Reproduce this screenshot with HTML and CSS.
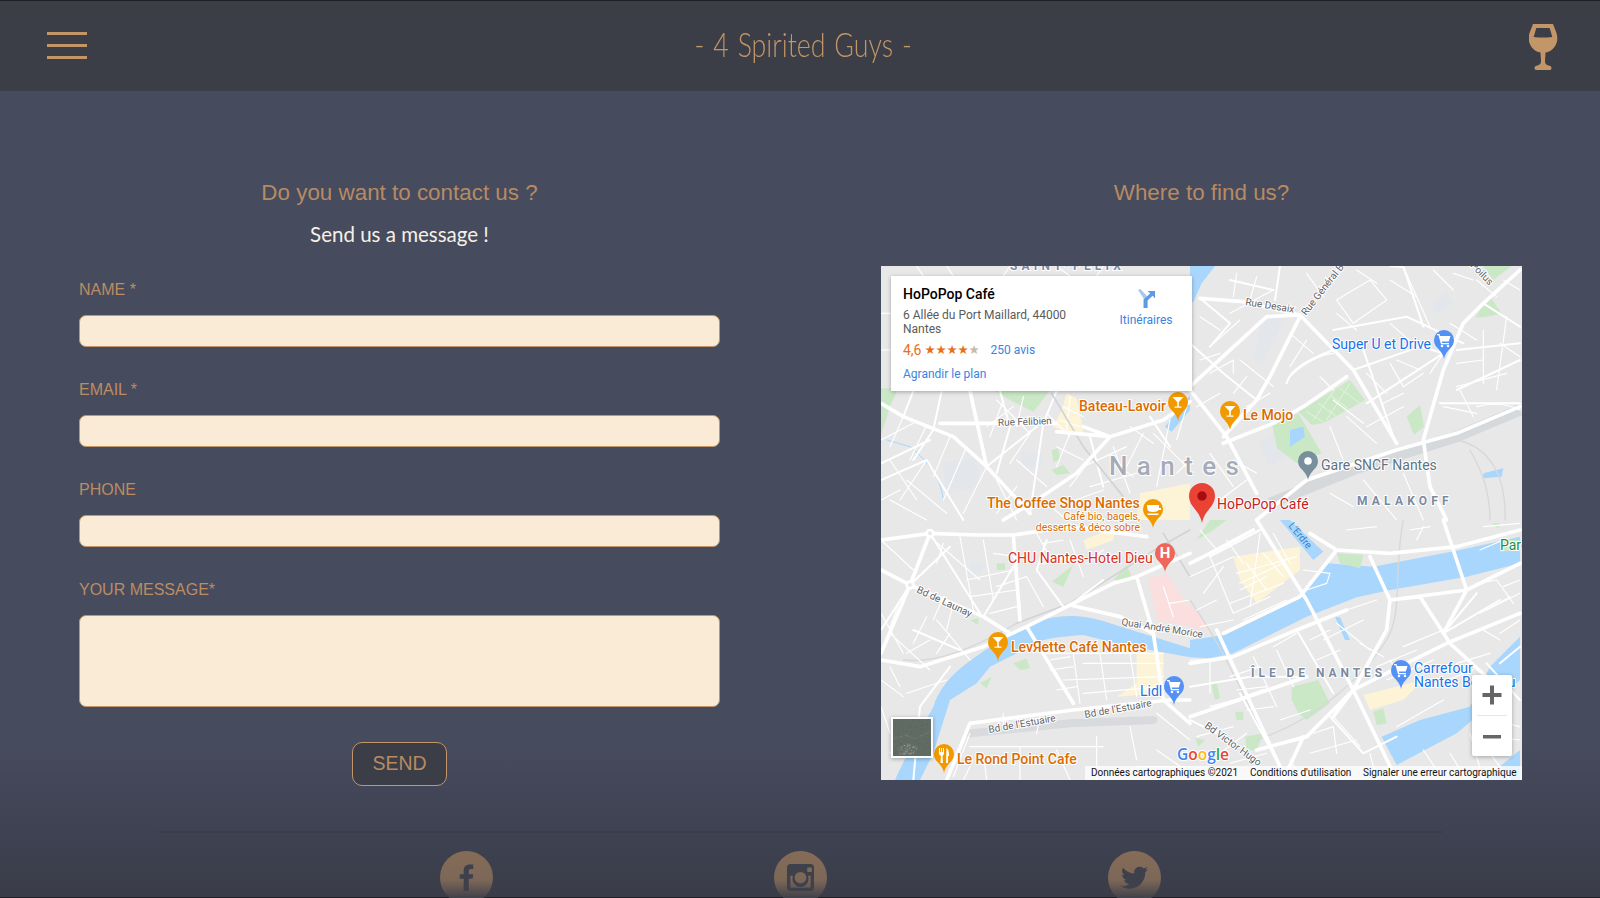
FILE: index.html
```html
<!DOCTYPE html>
<html lang="en">
<head>
<meta charset="utf-8">
<title>4 Spirited Guys - Contact</title>
<link rel="stylesheet" href="styles.css">
</head>
<body>
<header class="topbar">
  <button class="burger" aria-label="Menu"><span></span><span></span><span></span></button>
  <div class="brand">- 4 Spirited Guys -</div>
  <svg class="glass" viewBox="0 0 30 48" aria-hidden="true"><path fill-rule="evenodd" d="M4 0H24L27.500 9C29 14 28.500 19 25.500 23C23 26.500 19.500 28 16.500 28.500L16 37C16 40 17.500 41 21 42C23 42.700 23 45.500 21 46H7C5 45.500 5 42.700 7 42C10.500 41 12 40 12 37L11.500 28.500C8.500 28 5 26.500 2.500 23C-.5 19 -1 14 .5 9ZM7.300 4L4.700 13C11 13.800 17 13.800 23.300 13L20.700 4Z"/></svg>
</header>
<main class="content">
  <section class="contact">
    <h2 class="title">Do you want to contact us ?</h2>
    <p class="sub">Send us a message !</p>
    <form class="form">
      <label class="field"><span>NAME *</span><input type="text"></label>
      <label class="field"><span>EMAIL *</span><input type="text"></label>
      <label class="field"><span>PHONE</span><input type="text"></label>
      <label class="field field-last"><span>YOUR MESSAGE*</span><textarea></textarea></label>
      <button type="button" class="send">SEND</button>
    </form>
  </section>
  <section class="where">
    <h2 class="title">Where to find us?</h2>
    <div class="map">
      <svg class="mapsvg" viewBox="0 0 641 514" aria-label="Map of Nantes">
        <defs>
          <path id="pin" d="M0 19C-1 14-3 12-6 8.500C-8.500 6.500-10 3.500-10 0A10 10 0 1 1 10 0C10 3.500 8.500 6.500 6 8.500C3 12 1 14 0 19Z"/>
          <g id="cocktail"><path class="gl" d="M-5.500-5H5.500L.8 0V4.500H3.500V5.800H-3.500V4.500H-.8V0Z"/></g>
          <g id="cart"><path class="gl" d="M-7-6H-4.500L-3.800-4H6.500L4.800 1.500H-2.300L-1.800 3H5V4.300H-3L-5.500-4.800H-7Z"/><circle class="gl" cx="-2" cy="6" r="1.300"/><circle class="gl" cx="4" cy="6" r="1.300"/></g>
        </defs>
        <rect class="land" width="641" height="514"/>

        <!-- north west quarter -->
        <g transform="translate(-11,-6) scale(.3333)">
          <path class="park" d="M33 385H85L60 440L33 525Z"/>
          <path class="park" d="M360 385H545L490 455L420 420Z"/>
          <path class="park" d="M545 570L565 565L570 600L550 605ZM545 630L580 615L600 640L560 645Z"/>
          <path class="sand" d="M590 400L620 415L640 515L590 515L550 500L575 450Z"/>
          <path class="sand" d="M810 700L960 670V780H800Z"/>
          <path class="water" d="M885 500L960 405V450L905 515Z"/>
          <path class="stream" d="M50 540L120 560C180 610 210 650 220 720"/>
          <path class="block" d="M215 610L320 590L330 680L230 700ZM450 575L520 580L510 620L460 625Z"/>
          <path class="r3" d="M33 270H70M33 160H70M140 18L160 48M230 18L250 48M420 18L400 48M560 18L600 48M700 18L680 48M33 540L130 490M60 600L140 720M170 600L90 720M33 720L90 690M380 420L480 520M430 440L350 500M480 520L420 610M530 460L600 530M440 600L530 680M380 660L440 780M560 560L640 600M640 620L770 560M780 500L850 550M850 520L950 620M720 600L790 650"/>
          <path class="r3" d="M100 470L60 560M170 495L120 600M240 530L190 650M290 560L220 720M350 620L280 760M60 720L170 780M110 660L230 760M400 420L360 530M460 410L440 500M600 520L560 620M660 600L600 680M730 560L780 700M820 520L760 640M900 480L860 680M950 440L920 540M660 680L800 640M590 730L700 690M440 680L380 760M520 720L590 780M920 640L960 600M580 440L640 470M570 480L630 500M600 410L590 510"/>
          <path class="r2" d="M130 393L100 470M215 393L190 510L130 600M390 393L420 500L380 640M560 393L520 490L480 760M350 620L500 500M33 660L170 600L280 780M180 540L33 610M660 530L700 680M840 470L900 560"/>
          <path class="rail" d="M545 400L640 560L760 710"/>
          <path class="r1" d="M33 430L100 470L250 530L350 620L480 760M300 393L350 620M210 490L560 490M720 530L620 640L500 720L400 780M560 515L720 530L880 480L960 425M640 500L720 530"/>
        </g>

        <!-- north east quarter -->
        <g transform="translate(309,-6) scale(.3333)">
          <path class="water" d="M0 18H75L35 70L10 125L0 130Z"/>
          <path class="block" d="M215 170L290 170L220 310L190 300ZM720 130L770 95L790 130L740 165ZM205 550L270 510L290 590L240 620Z"/>
          <path class="park" d="M245 490L325 460L395 580L320 610L262 565Z"/>
          <path class="park" d="M325 455L480 360L525 420L400 490L365 495Z"/>
          <path class="park" d="M650 470L690 435L702 500L672 525Z"/>
          <path class="park" d="M855 172L900 108L935 162L880 172ZM880 18H965L910 60Z"/>
          <path class="water" d="M300 510L340 500L345 530L300 560ZM880 640L940 625L935 650L880 655Z"/>
          <path class="parkgrid" d="M350 455L405 490M385 430L440 470M420 405L480 450M450 385L510 430M440 380L370 480M480 370L410 480"/>
          <path class="railwide" d="M240 730L500 625L800 530L990 450"/>
          <path class="railthin" d="M280 700L620 570M400 660L800 545M800 540C900 560 950 650 945 780M840 570C880 640 900 700 900 780"/>
          <path class="r3" d="M440 120L540 60L590 120L490 190ZM440 160L500 210M120 160L250 90M60 260L150 180M60 340L130 300L130 340M150 300L250 380M390 350L430 390M300 350C340 310 400 280 430 280M430 420L520 490M530 500L640 440M560 550L470 470M420 500L460 600M600 310L640 380L700 340M640 20L720 200M720 340L760 280M880 210V370M950 170L920 390M800 380L950 340M760 440L860 460M810 390L850 470M860 440C900 430 950 430 990 450M860 60L920 110"/>
          <path class="r3" d="M140 40L130 110M200 50L180 120M350 40L400 110M440 30L400 90M500 30L560 70M600 60L680 110M730 30L790 90M790 40L850 60M30 170L90 210M30 300L90 280M20 440L90 400M130 400L170 350M170 440L240 400M300 220L370 280M350 240L300 320M600 190L680 260M620 300L690 330M780 190L860 240M800 310L880 300M940 60L990 90M930 250L990 290M530 340L590 400M580 430L640 400M420 700L490 740M520 660L620 780M640 640L700 780M130 600L200 640M60 580L130 680M90 720L170 660"/>
          <path class="r2" d="M430 210L650 170L820 250M520 270L610 530M490 330L690 260L760 280M880 130L990 200M800 270L990 250M750 430L990 430M800 390L990 300M530 430L760 280M30 115L120 190L60 260M120 60L250 90M0 250L100 340L200 420M270 18L255 120M600 18L640 20L700 200M290 370C300 330 350 300 430 270"/>
          <path class="r1" d="M30 115L160 125L330 165L490 330L620 550M330 170L240 350L200 420L100 530M0 390L110 530L200 700M820 190L760 330L700 540L720 680L770 780M990 30L880 130L820 190M100 550L250 490L340 440L470 350M200 780L350 660L620 570L800 520L990 440M0 380L230 170L330 165"/>
        </g>

        <!-- south west quarter -->
        <g transform="translate(-11,254) scale(.3333)">
          <path class="water" d="M75 780C110 700 170 600 190 560C220 470 300 410 470 320C540 285 620 275 720 310L960 385V412L870 395L760 375L640 345C560 350 480 360 440 400L360 440L320 490L240 540L190 700L150 780Z"/>
          <path class="pink" d="M835 175L890 160L960 270V320L860 300Z"/>
          <path class="sand" d="M640 60L740 20L730 60L650 90ZM800 400L880 400L880 520L740 530L800 490Z"/>
          <path class="park" d="M545 185L610 135L580 200ZM730 180L770 135L790 180ZM380 130L405 130V150L380 150ZM300 300L325 295V315ZM430 430L470 415L480 445L450 450ZM330 490L365 470L350 505Z"/>
          <path class="block" d="M300 130H350L330 160H300ZM670 100L730 130L700 170Z"/>
          <path class="railthin" d="M100 420C200 430 300 390 440 310"/>
          <path class="railwide2" d="M300 640L600 610L850 600"/>
          <path class="rail" d="M440 310L600 250L870 80L960 30M880 40L960 170"/>
          <path class="r3" d="M33 60L130 150M270 50L310 270M340 60L370 240M180 50L330 180M380 200L470 170L520 260M500 40L550 130M33 280L100 400M200 300L300 420M180 360L110 400M60 340L180 450M600 60L640 170M230 480L110 520M33 480L100 530M33 560L60 640M530 400L880 400M580 480L880 470M610 400L630 550M690 400L710 540M780 400L800 530M510 590L500 640M400 580L400 630M860 580L960 660M300 680H700M780 620L800 720M250 770L300 640"/>
          <path class="r3" d="M220 70L200 130M370 100L440 110M290 180L430 150M300 230L440 210M360 280L440 260M520 70L580 60M520 130L600 110M650 130L700 90M220 230L190 300M250 250L230 330M90 240L60 320M170 290L130 370M240 340L200 400M60 440L90 500M60 700L110 610M80 600L150 640M540 420L600 410M540 450L610 440M560 510L620 500M640 430H880M640 520L880 500M300 740L280 780M340 700L350 780M450 680V780M560 690L600 780M680 650V780M800 740H960M860 690L960 760M880 200L910 290M900 250L960 240"/>
          <path class="r2" d="M180 40L330 280M120 195L240 80M340 290L430 140M33 330L120 195M130 330L270 390M33 420L150 440M240 440L150 560L130 780M530 60L500 150L580 260M700 180L600 255"/>
          <path class="r1" d="M33 60L180 40L320 45L430 45L600 20L830 50M33 150L120 195L340 290L420 340M180 40L120 195L33 400M430 45L450 300M470 320L610 550M300 610L610 570L900 540L960 540M300 610L230 780M33 420L150 440L340 380L470 320L600 255L750 290L850 340L880 540M600 255L730 190L800 170L960 100M800 170L850 340M880 540L960 610"/>
          <circle class="rb" cx="180" cy="40" r="10"/><circle class="rb" cx="120" cy="195" r="10"/>
        </g>

        <!-- south east quarter -->
        <g transform="translate(309,254) scale(.3333)">
          <path class="water" d="M0 360L105 345L330 235L410 130L550 140L810 90L990 50V130L830 170L600 210L500 232L350 290L130 400L60 415L0 412Z"/>
          <path class="water" d="M575 650L690 600L840 560L900 440L990 350V480L800 640L620 735Z"/>
          <path class="water" d="M270 0H300L400 95L370 120ZM435 290L450 292L480 360L465 360Z"/>
          <path class="water" d="M880 780L990 690V780Z"/>
          <path class="pink" d="M0 240L60 330H0Z"/>
          <path class="sand" d="M130 110L330 80L330 150L200 250L150 180Z"/>
          <path class="sand" d="M520 525L700 480L640 540L540 570Z"/>
          <path class="park" d="M305 500L385 480L420 550L350 600L325 580L305 540Z"/>
          <path class="park" d="M440 100L520 105L510 145L450 130ZM550 575L580 565L590 610L560 615ZM930 60H990V90L935 95ZM65 495L80 490L90 535L75 540ZM135 575L160 575L160 600L140 600ZM165 650L220 640L200 690H170ZM15 655L45 660L25 680ZM60 0L110 0L70 30L20 60ZM905 10L930 10L925 25Z"/>
          <path class="railthin" d="M640 0C610 150 640 280 590 360C520 470 380 600 200 660M0 240C100 380 170 550 270 740"/>
          <path class="r3" d="M60 110L130 280M130 280L240 230M210 40L180 260M0 170L130 110M100 140L40 220M340 150L420 160L410 190L350 210M470 30L560 20M660 30L720 20M680 60L700 20M860 190L920 180L970 250M870 280L960 230M930 340L990 300M880 330L930 360M250 380L320 340M400 360L520 300M470 270L560 240M440 310L540 390M510 370L580 410M640 380L760 330M190 410L260 560M260 390L310 500M60 420V520M0 420H60M250 560L170 570M270 600L360 570M370 640L430 620L440 700M430 590L510 680M360 700L500 660M780 700L830 780M910 600L990 620M840 640L880 780M600 420L630 470M940 200L990 180"/>
          <path class="r3" d="M30 30L80 90M110 60L160 130M250 40L300 130M150 210L230 170M120 250L280 190M160 300L290 240M20 270L80 240M30 320L130 300M210 440L120 470M230 500L140 510M60 560L170 530M20 650L130 620M90 700L170 640M120 730L230 700M360 360L420 330M380 420L450 390M560 440L680 390M590 480L730 420M620 620L760 540M720 500L850 450M800 430L900 400M870 90L940 60M880 20L990 10M890 270L990 220M540 700L560 780M700 690L760 780M900 650L990 660M900 700L960 780M380 740L440 780M300 720L340 780M170 130L230 210M220 100L280 170M140 160L320 110M150 190L280 130"/>
          <path class="r2" d="M60 110L210 30M0 500L180 470L350 470M0 590L220 510M0 600L80 640M150 520L270 740M320 330L430 520M860 220L760 340M760 340L930 240M420 590L520 700L620 650M930 430L990 380M890 430L990 540"/>
          <path class="r1" d="M200 0L350 240L490 510L620 780M100 340L330 230L440 90L600 100L800 80L990 30M440 90L360 40M540 110L600 240M760 0L830 210L760 340M600 240L830 210L990 130M600 240L590 330L490 510M690 230L780 370L900 480M490 510L770 370L990 280M350 650L490 510L430 590M340 650L280 780M0 130L60 100L190 30M80 330L270 740M130 410L320 330L470 270M0 590L350 470M350 650L200 690M0 430L130 410M690 230L600 240"/>
        </g>

        <g transform="translate(-881,-266)">
          <text class="dist" x="1010" y="270" letter-spacing="4.200">SAINT-FÉLIX</text>
          <text class="road" transform="translate(998,426) rotate(-2)">Rue Félibien</text>
          <text class="road" transform="translate(1245,305) rotate(9)">Rue Desaix</text>
          <text class="road" transform="translate(1306,316) rotate(-52)">Rue Général B</text>
          <text class="road" transform="translate(1470,266) rotate(46)">Poilus</text>
          <text class="road" transform="translate(916,592) rotate(25)">Bd de Launay</text>
          <text class="road" transform="translate(1121,625) rotate(9)">Quai André Morice</text>
          <text class="road" transform="translate(989,733) rotate(-10)">Bd de l'Estuaire</text>
          <text class="road" transform="translate(1085,718) rotate(-10)">Bd de l'Estuaire</text>
          <text class="road" transform="translate(1204,727) rotate(36)">Bd Victor Hugo</text>
          <text class="erdre" transform="translate(1288,526) rotate(50)">L'Erdre</text>
          <text class="city" x="1109" y="475" letter-spacing="9.400">Nantes</text>
          <text class="dist" x="1357" y="505" letter-spacing="4.200">MALAKOFF</text>
          <text class="dist" x="1251" y="677" letter-spacing="3.950">ÎLE DE NANTES</text>

          <text class="lbl or" x="1079" y="411">Bateau-Lavoir</text>
          <text class="lbl or" x="1243" y="420">Le Mojo</text>
          <text class="lbl or" x="987" y="508">The Coffee Shop Nantes</text>
          <text class="lbl ors" x="1140" y="520" text-anchor="end">Café bio, bagels,</text>
          <text class="lbl ors" x="1140" y="531" text-anchor="end">desserts &amp; déco sobre</text>
          <text class="lbl or" x="1011" y="652">LevЯette Café Nantes</text>
          <text class="lbl or" x="957" y="764">Le Rond Point Cafe</text>
          <text class="lbl rd" x="1008" y="563">CHU Nantes-Hotel Dieu</text>
          <text class="lbl rd2" x="1217" y="509">HoPoPop Café</text>
          <text class="lbl bl" x="1332" y="349">Super U et Drive</text>
          <text class="lbl bl" x="1140" y="696">Lidl</text>
          <text class="lbl bl" x="1414" y="673">Carrefour</text>
          <text class="lbl bl" x="1414" y="687">Nantes Beaulieu</text>
          <text class="lbl gy" x="1321" y="470">Gare SNCF Nantes</text>
          <text class="lbl gr" x="1500" y="550">Parc</text>

          <use href="#pin" class="pin-o" x="1178" y="402"/><use href="#cocktail" x="1178" y="402"/>
          <use href="#pin" class="pin-o" x="1230" y="411"/><use href="#cocktail" x="1230" y="411"/>
          <use href="#pin" class="pin-o" x="998" y="642"/><use href="#cocktail" x="998" y="642"/>
          <use href="#pin" class="pin-o" x="1153" y="509"/>
          <path class="gl" d="M1147 505H1159V508H1161V510H1158.500C1157.500 512.500 1148.500 512.500 1147.500 510ZM1147 513.500H1159L1158 515H1148Z"/>
          <use href="#pin" class="pin-o" x="944" y="754"/>
          <path class="gl" d="M939 748H940V752H941V748H942V752H943V748H944V753C944 755 943 755.500 942.500 756L943 763H940.500L941 756C940 755.500 939 755 939 753ZM946.500 748C948.500 749 949 752 949 756H948V763H946Z"/>
          <use href="#pin" class="pin-r" x="1165" y="553"/>
          <text class="hh" x="1165" y="558" text-anchor="middle">H</text>
          <use href="#pin" class="pin-b" x="1444" y="340"/><use href="#cart" x="1444" y="340"/>
          <use href="#pin" class="pin-b" x="1174" y="686"/><use href="#cart" x="1174" y="686"/>
          <use href="#pin" class="pin-b" x="1401" y="670"/><use href="#cart" x="1401" y="670"/>
          <use href="#pin" class="pin-g" x="1308" y="461"/><circle class="gl" cx="1308" cy="461" r="3.800"/>
          <path class="pin-main" d="M1202 523C1200 514 1196 511 1192.500 506C1190 502.500 1189 499 1189 496A13 13 0 1 1 1215 496C1215 499 1214 502.500 1211.500 506C1208 511 1204 514 1202 523Z"/>
          <circle class="pin-dot" cx="1202" cy="496" r="4.700"/>

          <text class="google" x="1177" y="760"><tspan class="g-b">G</tspan><tspan class="g-r">o</tspan><tspan class="g-y">o</tspan><tspan class="g-b">g</tspan><tspan class="g-g">l</tspan><tspan class="g-r">e</tspan></text>
          <rect class="attr" x="1085" y="766" width="437" height="14"/>
          <text class="attrt" x="1091" y="776">Données cartographiques ©2021</text>
          <text class="attrt" x="1250" y="776">Conditions d'utilisation</text>
          <text class="attrt" x="1363" y="776">Signaler une erreur cartographique</text>
        </g>
      </svg>
      <div class="card">
        <div class="card-main">
          <div class="place">HoPoPop Café</div>
          <div class="addr">6 Allée du Port Maillard, 44000 Nantes</div>
          <div class="rating"><b>4,6</b><i>★★★★</i><i class="half">★</i><a>250 avis</a></div>
          <a class="bigger">Agrandir le plan</a>
        </div>
        <div class="dirs">
          <svg class="dirs-ic" viewBox="0 0 20 20" aria-hidden="true"><path class="dir-l" d="M1 1L3.500 0L11 8V20H7V10Z"/><path class="dir-d" d="M7 20V11L14 4.500L11 2H19V10L16.500 7L11 12V20Z"/></svg>
          <a>Itinéraires</a>
        </div>
      </div>
      <div class="thumb">
        <svg viewBox="0 0 38 37" aria-hidden="true">
          <defs><filter id="sat" x="0" y="0" width="100%" height="100%"><feTurbulence type="fractalNoise" baseFrequency=".5" numOctaves="3" seed="4"/><feColorMatrix type="matrix" values="0 0 0 0 .12  0 0 0 0 .15  0 0 0 0 .13  2 2 0 0 -1.200"/></filter></defs>
          <rect class="s0" width="38" height="37"/>
          <path class="s2" d="M4 30L14 24L26 28L20 36L6 36Z"/>
          <path class="s3" d="M38 12L22 20L12 16L0 20"/>
          <rect width="38" height="37" filter="url(#sat)"/>
        </svg>
      </div>
      <div class="zoom">
        <svg class="z-btn" viewBox="0 0 40 40" aria-hidden="true"><path d="M10.500 18H18V10.500H22V18H29.500V22H22V29.500H18V22H10.500Z"/></svg>
        <div class="z-sep"></div>
        <svg class="z-btn" viewBox="0 0 40 40" aria-hidden="true"><path d="M11 19H29V22.500H11Z"/></svg>
      </div>
    </div>
  </section>
</main>
<footer class="foot">
  <a class="social"><svg viewBox="0 0 24 24" aria-hidden="true"><path d="M9.500 24V13H6V9H9.500V6C9.500 2.500 11.500 .5 15 .5H18V4.500H16C14.500 4.500 14 5.200 14 6.500V9H18L17.400 13H14V24Z"/></svg></a>
  <a class="social"><svg viewBox="0 0 24 24" aria-hidden="true"><path fill-rule="evenodd" d="M3 0H21C22.700 0 24 1.300 24 3V21C24 22.700 22.700 24 21 24H3C1.300 24 0 22.700 0 21V3C0 1.300 1.300 0 3 0ZM18 3V7H22V3ZM12 7A5.200 5.200 0 1 0 12 17.400A5.200 5.200 0 1 0 12 7ZM3 10.500V20.500C3 20.800 3.200 21 3.500 21H20.500C20.800 21 21 20.800 21 20.500V10.500H18.700A7.200 7.200 0 1 1 5.300 10.500Z"/></svg></a>
  <a class="social"><svg viewBox="0 0 24 24" aria-hidden="true"><path d="M24 4.600C23.100 5 22.200 5.300 21.200 5.400C22.200 4.800 23 3.800 23.400 2.700C22.400 3.300 21.400 3.700 20.200 3.900C19.300 3 18 2.400 16.600 2.400C13.900 2.400 11.700 4.600 11.700 7.300C11.700 7.700 11.700 8.100 11.800 8.400C7.700 8.200 4.100 6.300 1.700 3.300C1.200 4 1 4.900 1 5.800C1 7.500 1.900 9 3.200 9.900C2.400 9.900 1.600 9.700 1 9.300V9.400C1 11.800 2.700 13.700 4.900 14.200C4.100 14.400 3.300 14.400 2.700 14.300C3.300 16.200 5.100 17.700 7.300 17.700C5.600 19 3.500 19.800 1.200 19.800C.8 19.800 .4 19.800 0 19.700C2.200 21.100 4.800 21.900 7.500 21.900C16.600 21.900 21.500 14.400 21.500 7.900V7.300C22.500 6.500 23.300 5.600 24 4.600Z"/></svg></a>
</footer>
</body>
</html>
```

FILE: styles.css
```css
* { box-sizing: border-box; }
html, body { margin: 0; height: 898px; overflow: hidden; }
body {
  background: linear-gradient(#464b5e 0, #464b5e 740px, #3f4252 832px, #3a3c48 897px, #1e1f25 897px);
  font-family: "Liberation Sans", Arial, sans-serif;
  display: flex;
  flex-direction: column;
}

/* top bar */
.topbar {
  height: 91px;
  flex: none;
  background: #3b3e47;
  border-top: 1px solid #1f2026;
  display: flex;
  align-items: center;
  justify-content: space-between;
  padding: 0 41px 0 47px;
}
.burger {
  width: 40px;
  height: 27px;
  margin-bottom: 1px;
  padding: 0;
  border: 0;
  background: none;
  display: flex;
  flex-direction: column;
  justify-content: space-between;
}
.burger span { display: block; height: 3px; background: #c29667; }
.brand {
  font-family: Lato, sans-serif;
  font-weight: 300;
  font-size: 33px;
  word-spacing: 2px;
  color: #c29667;
  margin: 0 10px 4px 0;
  white-space: nowrap;
  transform: scaleX(.81);
}
.glass { width: 30px; height: 48px; fill: #c29667; margin-top: 4px; }

/* content */
.content {
  flex: none;
  height: 740px;
  padding: 87px 78px 0 79px;
  display: grid;
  grid-template-columns: 641px 641px;
  justify-content: space-between;
}
.title {
  margin: 0;
  font-size: 22.400px;
  line-height: 30px;
  font-weight: 400;
  text-align: center;
  color: #b88a62;
}
.sub {
  margin: 12px 0 0;
  font-family: Lato, sans-serif;
  font-weight: 400;
  font-size: 20.500px;
  line-height: 28px;
  text-align: center;
  color: #f6f0e6;
}
.form { display: flex; flex-direction: column; margin-top: 29px; }
.field { display: flex; flex-direction: column; height: 100px; }
.field span { font-size: 16px; line-height: 26px; height: 38px; flex: none; color: #bd8c62; }
.field input, .field textarea {
  display: block;
  flex: none;
  width: 100%;
  height: 32px;
  padding: 0;
  border: 1px solid #c29667;
  border-radius: 7px;
  background: #faebd7;
  outline: 0;
  resize: none;
}
.field-last { height: auto; }
.field textarea { height: 92px; }
.send {
  align-self: center;
  width: 95px;
  height: 44px;
  margin-top: 35px;
  border: 1px solid #c29667;
  border-radius: 10px;
  background: #3b3e47;
  color: #b88a62;
  font: 19.500px/1 "Liberation Sans", Arial, sans-serif;
}

/* map */
.map { position: relative; width: 641px; height: 514px; margin-top: 58px; overflow: hidden; background: #e8e8e8; }
.mapsvg { display: block; width: 641px; height: 514px; }
.land { fill: #e8e8e8; }
.water { fill: #a8d6fd; }
.park { fill: #cbe8c6; }
.sand { fill: #fdf3d6; }
.pink { fill: #fbdfdf; }
.block { fill: #e3e7ec; }
.stream { fill: none; stroke: #a8d6fd; stroke-width: 3; }
.r1, .r2, .r3, .rail, .railwide, .railwide2, .railthin, .parkgrid { fill: none; stroke-linejoin: round; stroke-linecap: round; }
.r1 { stroke: #fff; stroke-width: 11; }
.r2 { stroke: #fff; stroke-width: 6; }
.r3 { stroke: #fff; stroke-width: 3.500; }
.rb { fill: #e8e8e8; stroke: #fff; stroke-width: 8; }
.rail { stroke: #d0d3d7; stroke-width: 5; }
.railwide { stroke: #d6d9dc; stroke-width: 34; stroke-linecap: butt; }
.railwide2 { stroke: #d8dadd; stroke-width: 24; }
.railthin { stroke: #d6d8db; stroke-width: 4; }
.parkgrid { stroke: #e3f2df; stroke-width: 3; }
.mapsvg text { font-family: Roboto, sans-serif; }
.road { font-size: 10px; fill: #5f6368; paint-order: stroke; stroke: #fff; stroke-width: 2px; }
.erdre { font-size: 10px; fill: #3b7fc4; }
.dist { font-size: 12px; font-weight: 700; fill: #7b8aa0; paint-order: stroke; stroke: #fff; stroke-width: 2px; }
.city { font-size: 26px; font-weight: 500; fill: #a4acb9; paint-order: stroke; stroke: #fff; stroke-width: 2px; }
.lbl { font-size: 14px; font-weight: 500; paint-order: stroke; stroke: #fff; stroke-width: 2px; stroke-linejoin: round; }
.or { fill: #d96b00; }
.ors { fill: #d96b00; font-size: 10.500px; font-weight: 400; }
.rd { fill: #d93025; font-weight: 400; }
.rd2 { fill: #c5221f; font-weight: 400; }
.bl { fill: #1a73e8; font-weight: 400; font-size: 14px; }
.gy { fill: #5f7380; font-weight: 400; }
.gr { fill: #1e8e3e; font-weight: 400; }
.gl { fill: #fff; }
.pin-o { fill: #f29900; }
.pin-b { fill: #5491f5; }
.pin-r { fill: #ee675c; }
.pin-g { fill: #78909c; }
.pin-main { fill: #ea4335; }
.pin-dot { fill: #a50e0e; }
.mapsvg .hh { font-size: 15px; font-weight: 700; fill: #fff; }
.mapsvg .google { font-family: "Open Sans", sans-serif; font-size: 15.500px; font-weight: 600; paint-order: stroke; stroke: #fff; stroke-width: 2px; }
.g-b { fill: #4285f4; }
.g-r { fill: #ea4335; }
.g-y { fill: #fbbc05; }
.g-g { fill: #34a853; }
.attr { fill: #fff; fill-opacity: .75; }
.attrt { font-size: 10px; fill: #111; }

.card {
  position: absolute;
  left: 10px;
  top: 10px;
  width: 301px;
  height: 115px;
  padding: 10px 12px;
  background: #fff;
  box-shadow: 0 1px 4px rgba(0, 0, 0, .3);
  display: flex;
  font-family: Roboto, sans-serif;
}
.card a { color: #3a84df; }
.card-main { width: 190px; }
.place { font-size: 14px; font-weight: 500; line-height: 17px; color: #000; }
.addr { font-size: 12px; line-height: 14px; color: #5b5b5b; margin-top: 5px; }
.rating { display: flex; align-items: center; font-size: 12px; line-height: 18px; margin-top: 5px; white-space: nowrap; }
.rating b { font-size: 14px; font-weight: 400; color: #e7711b; margin-right: 3px; }
.rating i { font-style: normal; color: #e7711b; font-size: 12.500px; font-family: "DejaVu Sans", sans-serif; letter-spacing: -.2px; }
.rating i.half { color: #c9b9a8; margin-right: 11px; }
.bigger { display: block; font-size: 12px; line-height: 14px; margin-top: 8px; }
.dirs {
  margin-left: 26px;
  width: 54px;
  display: flex;
  flex-direction: column;
  align-items: center;
  font-size: 12px;
  padding-top: 3px;
}
.dirs-ic { width: 19px; height: 19px; margin-bottom: 5px; }
.dir-l { fill: #a9c8f0; }
.dir-d { fill: #5c9ae6; }
.thumb {
  position: absolute;
  left: 10px;
  top: 451px;
  width: 42px;
  height: 41px;
  border: 2px solid #fff;
  box-shadow: 0 1px 4px rgba(0, 0, 0, .3);
}
.thumb svg { display: block; width: 38px; height: 37px; }
.s0 { fill: #5b665e; }
.s2 { fill: #98988c; }
.s3 { fill: none; stroke: #7d8c88; stroke-width: 1.500; }
.zoom {
  position: absolute;
  left: 591px;
  top: 409px;
  width: 40px;
  height: 81px;
  background: #fff;
  border-radius: 2px;
  box-shadow: 0 1px 4px rgba(0, 0, 0, .3);
  display: flex;
  flex-direction: column;
  align-items: center;
}
.z-btn { width: 40px; height: 40px; fill: #666; flex: none; }
.z-sep { width: 30px; height: 1px; background: #e6e6e6; flex: none; }

/* footer */
.foot {
  flex: none;
  width: 1283px;
  height: 67px;
  margin-left: 159px;
  border-top: 2px solid #3a3c47;
  padding: 18px 0 0 281px;
  display: flex;
  gap: 281px;
}
.social {
  width: 53px;
  height: 53px;
  flex: none;
  border-radius: 50%;
  background: linear-gradient(#856c58 0, #7c6757 55%, #3e3f49 90%);
  display: flex;
  align-items: center;
  justify-content: center;
}
.social svg { width: 27px; height: 27px; fill: #3e404c; }
```
